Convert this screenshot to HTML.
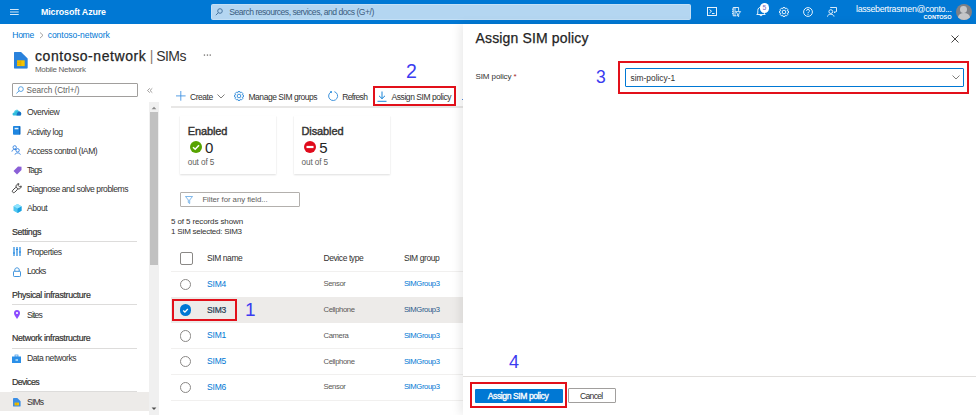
<!DOCTYPE html>
<html><head><meta charset="utf-8">
<style>
*{box-sizing:border-box;margin:0;padding:0}
html,body{width:976px;height:415px;overflow:hidden;background:#fff;font-family:"Liberation Sans",sans-serif;color:#323130}
.a{position:absolute;white-space:nowrap;line-height:1}
svg{position:absolute;overflow:visible}
#hdr{position:absolute;left:0;top:0;width:976px;height:24px;background:#0078d4}
.nav{font-size:8.6px;color:#323130;letter-spacing:-0.45px}
.sec{font-size:8.8px;color:#323130;letter-spacing:-0.35px;-webkit-text-stroke:0.2px #323130}
.dv{position:absolute;height:1px;background:#e1dfdd}
.lnk{color:#0078d4}
.red{position:absolute;border:2px solid #e2101a}
.sb{-webkit-text-stroke:0.28px currentColor}
.num{position:absolute;font-size:19.5px;color:#3b3bf0;line-height:1}
</style></head><body>
<div id="hdr"></div>
<!-- hamburger -->
<svg style="left:0;top:0" width="30" height="24"><path d="M10 9.5 H18.7 M10 12 H18.7 M10 14.5 H18.7" stroke="#d4e7f8" stroke-width="1.05"/></svg>
<div class="a" style="left:41px;top:7.7px;font-size:8.9px;font-weight:700;color:#fff;letter-spacing:-0.12px">Microsoft Azure</div>
<!-- global search -->
<div style="position:absolute;left:211px;top:4px;width:480px;height:15.6px;background:#b4d6f1;border:1px solid #c4e0f6;border-radius:1.5px"></div>
<svg style="left:215px;top:8px" width="8" height="8" viewBox="0 0 8 8"><circle cx="5" cy="3" r="2.3" fill="none" stroke="#3d6c99" stroke-width="0.9"/><line x1="3.3" y1="4.7" x2="0.8" y2="7.2" stroke="#3d6c99" stroke-width="0.9"/></svg>
<div class="a" style="left:229.3px;top:7.8px;font-size:8.6px;letter-spacing:-0.5px;color:#3a5c7e">Search resources, services, and docs (G+/)</div>
<!-- header icons -->
<svg style="left:707px;top:7px" width="10" height="9"><rect x="0.5" y="0.5" width="9" height="8" fill="none" stroke="#fff" stroke-width="0.9"/><path d="M2.5 2.5 L4.5 4.2 L2.5 6" fill="none" stroke="#fff" stroke-width="0.9"/><line x1="5" y1="6.5" x2="7.5" y2="6.5" stroke="#fff" stroke-width="0.9"/></svg>
<svg style="left:731px;top:7px" width="10" height="10" viewBox="0 0 10 10"><path d="M5.5 8.8 H2.2 V0.5 H7.6 V3.8" fill="none" stroke="#fff" stroke-width="0.85"/><path d="M1 2.2 H2.2 M1 4.4 H2.2 M1 6.6 H2.2 M4 0.5 V8.8" stroke="#fff" stroke-width="0.8"/><path d="M4.6 4.6 H9.6 L7.7 7 V9.6 L6.6 9 V7 Z" fill="#0078d4" stroke="#fff" stroke-width="0.8" stroke-linejoin="round"/></svg>
<svg style="left:756px;top:6px" width="10" height="10"><path d="M0.8 8.5 L1.8 7.2 V4.5 C1.8 2.3 3.3 1.2 5 1.2 C6.7 1.2 8.2 2.3 8.2 4.5 V7.2 L9.2 8.5 Z" fill="none" stroke="#fff" stroke-width="0.9" stroke-linejoin="round"/><path d="M3.8 9.6 H6.2" stroke="#fff" stroke-width="0.9"/></svg>
<div style="position:absolute;left:759.5px;top:3.2px;width:9.6px;height:9.6px;border-radius:50%;background:#fff"></div>
<div class="a" style="left:762.4px;top:4.6px;font-size:6.8px;color:#7a6ac0">5</div>
<svg style="left:779px;top:6.8px" width="10" height="10" viewBox="0 0 10 10"><path d="M4.1 0.5 H5.9 L6.3 1.8 L7.6 1.2 L8.8 2.4 L8.2 3.7 L9.5 4.1 V5.9 L8.2 6.3 L8.8 7.6 L7.6 8.8 L6.3 8.2 L5.9 9.5 H4.1 L3.7 8.2 L2.4 8.8 L1.2 7.6 L1.8 6.3 L0.5 5.9 V4.1 L1.8 3.7 L1.2 2.4 L2.4 1.2 L3.7 1.8 Z" fill="none" stroke="#fff" stroke-width="0.9" stroke-linejoin="round"/><circle cx="5" cy="5" r="1.8" fill="none" stroke="#fff" stroke-width="0.9"/></svg>
<svg style="left:803px;top:7px" width="10" height="10" viewBox="0 0 10 10"><circle cx="5" cy="5" r="4.4" fill="none" stroke="#fff" stroke-width="0.9"/><path d="M3.5 3.8 C3.5 2 6.5 2 6.5 3.8 C6.5 5 5 5 5 6.3" fill="none" stroke="#fff" stroke-width="0.9"/><circle cx="5" cy="7.6" r="0.5" fill="#fff"/></svg>
<svg style="left:827px;top:7px" width="10" height="10" viewBox="0 0 10 10"><path d="M3.2 0.5 H9.5 V4.5 L7.2 5.5" fill="none" stroke="#fff" stroke-width="0.85"/><circle cx="7.5" cy="5.1" r="0.6" fill="#fff"/><circle cx="3.8" cy="4.6" r="1.9" fill="none" stroke="#fff" stroke-width="0.85"/><path d="M0.5 9.6 C0.5 6.5 7 6.5 7 9.6" fill="none" stroke="#fff" stroke-width="0.85"/></svg>
<div class="a" style="left:856px;top:4.6px;font-size:8.8px;color:#fff;letter-spacing:-0.3px">lassebertrasmen@conto...</div>
<div class="a" style="left:923.5px;top:15px;font-size:5.6px;font-weight:700;color:#fff">CONTOSO</div>
<div style="position:absolute;left:955.8px;top:3.7px;width:16.3px;height:16.3px;border-radius:50%;background:#7d8086;overflow:hidden">
 <div style="position:absolute;left:4.7px;top:2.6px;width:6.8px;height:6.8px;border-radius:50%;background:#c5c6c8"></div>
 <div style="position:absolute;left:1.8px;top:9.4px;width:12.7px;height:9px;border-radius:50% 50% 0 0;background:#c5c6c8"></div>
</div>

<!-- breadcrumb -->
<div class="a lnk" style="left:12.3px;top:31px;font-size:8.6px;letter-spacing:-0.35px">Home</div>
<svg style="left:39px;top:32px" width="5" height="7"><path d="M1 0.5 L4 3.3 L1 6.1" fill="none" stroke="#8a8886" stroke-width="0.8"/></svg>
<div class="a lnk" style="left:47.7px;top:31px;font-size:8.6px;letter-spacing:-0.07px">contoso-network</div>

<!-- resource icon -->
<svg style="left:13.5px;top:51.5px" width="14" height="17" viewBox="0 0 14 17"><path d="M0 0.6 Q0 0 0.6 0 H7 L13.6 6.4 V15.8 Q13.6 16.4 13 16.4 H0.6 Q0 16.4 0 15.8 Z" fill="#3a8ee6"/><path d="M0 0.6 Q0 0 0.6 0 H7 L13.6 6.4 V15.8 Q13.6 16.4 13 16.4 H0.6 Q0 16.4 0 15.8 Z" fill="#0f6cc9" opacity="0.35" transform="translate(0,0)"/><rect x="3" y="8.3" width="7.7" height="5.8" fill="#f7c400"/><path d="M3 10.2 H6.5 M3 12.2 H6.5 M6.8 8.3 V14.1" stroke="#d49e00" stroke-width="0.7"/></svg>
<div class="a" style="left:35px;top:49.4px;font-size:14px;color:#242424;letter-spacing:0.58px;-webkit-text-stroke:0.25px #242424">contoso-network<span style="-webkit-text-stroke:0;letter-spacing:-0.55px;color:#323130"> <span style="color:#8a7a70;font-weight:400">|</span> SIMs</span></div>
<svg style="left:203px;top:54px" width="9" height="3"><rect x="0.8" y="0.3" width="1.3" height="1.6" fill="#8a8886"/><rect x="3.8" y="0.3" width="1.3" height="1.6" fill="#8a8886"/><rect x="6.6" y="0.3" width="1.3" height="1.6" fill="#8a8886"/></svg>
<div class="a" style="left:35px;top:65.8px;font-size:8px;letter-spacing:-0.32px;color:#605e5c">Mobile Network</div>

<!-- sidebar search -->
<div style="position:absolute;left:12.3px;top:83.3px;width:125.5px;height:14.2px;border:1px solid #a19f9d;border-radius:1px"></div>
<svg style="left:15.5px;top:86.3px" width="8" height="8" viewBox="0 0 8 8"><circle cx="4.9" cy="3.1" r="2.4" fill="none" stroke="#2b88d8" stroke-width="0.75"/><line x1="3.2" y1="4.8" x2="0.4" y2="7.4" stroke="#2b88d8" stroke-width="0.8"/></svg>
<div class="a" style="left:26.6px;top:87.1px;font-size:8.2px;color:#605e5c;letter-spacing:-0.05px">Search (Ctrl+/)</div>
<svg style="left:146.5px;top:88px" width="6" height="5" viewBox="0 0 6 5"><path d="M2.8 0.3 L0.5 2.5 L2.8 4.7 M5.3 0.3 L3 2.5 L5.3 4.7" fill="none" stroke="#8a8886" stroke-width="0.8"/></svg>

<!-- sidebar scrollbar -->
<div style="position:absolute;left:149px;top:102px;width:9.8px;height:313px;background:#f0f0f0"></div>
<div style="position:absolute;left:149.8px;top:111.7px;width:8.1px;height:153.3px;background:#c1c1c1"></div>
<svg style="left:151.2px;top:106.2px" width="6" height="4"><path d="M0.6 3.2 L3 0.8 L5.4 3.2 Z" fill="#8a8a8a"/></svg>
<svg style="left:151.2px;top:407.3px" width="6" height="4"><path d="M0.6 0.6 L3 3 L5.4 0.6 Z" fill="#505050"/></svg>

<!-- sidebar selected -->
<div style="position:absolute;left:0;top:392.2px;width:148.8px;height:18.4px;background:#edebe9"></div>

<!-- sidebar items -->
<div class="a nav" style="left:27px;top:108.0px">Overview</div>
<div class="a nav" style="left:27px;top:128px">Activity log</div>
<div class="a nav" style="left:27px;top:146.5px">Access control (IAM)</div>
<div class="a nav" style="left:27px;top:166px;letter-spacing:-0.95px">Tags</div>
<div class="a nav" style="left:27px;top:185.1px;letter-spacing:-0.45px">Diagnose and solve problems</div>
<div class="a nav" style="left:27px;top:203.7px">About</div>
<div class="a sec" style="left:12px;top:227.6px">Settings</div>
<div class="dv" style="left:12px;top:241px;width:125px;background:#dddcdb"></div>
<div class="a nav" style="left:27px;top:248.1px">Properties</div>
<div class="a nav" style="left:27px;top:266.9px;letter-spacing:-0.8px">Locks</div>
<div class="a sec" style="left:12px;top:290.5px">Physical infrastructure</div>
<div class="dv" style="left:12px;top:304px;width:125px;background:#dddcdb"></div>
<div class="a nav" style="left:27px;top:310.6px;letter-spacing:-0.85px">Sites</div>
<div class="a sec" style="left:12px;top:334.1px">Network infrastructure</div>
<div class="dv" style="left:12px;top:347.6px;width:125px;background:#dddcdb"></div>
<div class="a nav" style="left:27px;top:354.2px">Data networks</div>
<div class="a sec" style="left:12px;top:377.8px;letter-spacing:-0.62px">Devices</div>
<div class="dv" style="left:12px;top:391.4px;width:125px;background:#dddcdb"></div>
<div class="a nav" style="left:27px;top:398.0px;letter-spacing:-0.85px">SIMs</div>

<!-- sidebar icons -->
<svg style="left:11.8px;top:108.6px" width="10" height="7" viewBox="0 0 10 7"><path d="M2 6.6 C0.2 6.6 0 3.6 2 3.4 C2.3 0.6 6 -0.2 7 2.4 C9.6 2.4 10 6.6 7.8 6.6 Z" fill="#32bedd"/><path d="M4.5 6.6 C4.5 3.8 6.5 2.2 7.4 2.5 C9.6 2.6 10 6.6 7.8 6.6 Z" fill="#1a6fc4"/><path d="M2.2 3.6 C2.8 1.6 4.5 1 5.6 1.3" fill="none" stroke="#9cebff" stroke-width="0.6"/></svg>
<svg style="left:13.1px;top:126.3px" width="8" height="9" viewBox="0 0 8 9"><rect x="0" y="0" width="7.3" height="8.7" rx="0.8" fill="#1f86e0"/><rect x="6.3" y="0.4" width="1" height="8" fill="#0f5fb0"/><rect x="1.6" y="1.8" width="3.8" height="1.5" fill="#fff" opacity="0.9"/></svg>
<svg style="left:11px;top:144.8px" width="10" height="10" viewBox="0 0 10 10"><g fill="none" stroke="#2f7fe0" stroke-width="0.9"><circle cx="3.7" cy="2.4" r="1.7"/><path d="M0.9 6.6 C0.9 4.6 3.5 4 5.2 4.6"/><circle cx="6.6" cy="5.3" r="1.7"/><path d="M4 9.6 C4 7.4 9.3 7.4 9.3 9.6"/></g></svg>
<svg style="left:12.5px;top:165.5px" width="9" height="9" viewBox="0 0 9 9"><path d="M0.5 5 L5 0.5 L8.5 0.8 L8.5 4 L4 8.5 Z" fill="#8a5fd6"/></svg>
<svg style="left:11px;top:183px" width="11" height="11" viewBox="0 0 11 11"><g transform="rotate(45 5.5 5.5)" fill="none" stroke="#323130" stroke-width="0.85"><rect x="4.1" y="4.6" width="2.8" height="6.2" rx="1.4"/><path d="M4.1 4.8 C2.6 4 2.6 0.6 4 0.4 L4.6 2.2 H6.4 L7 0.4 C8.4 0.6 8.4 4 6.9 4.8"/></g></svg>
<svg style="left:12.5px;top:203.5px" width="9" height="9" viewBox="0 0 9 9"><path d="M4.5 0 L8.5 2.2 L8.5 6.8 L4.5 9 L0.5 6.8 L0.5 2.2 Z" fill="#50c7f0"/><path d="M4.5 4.4 L8.5 2.2 L8.5 6.8 L4.5 9 Z" fill="#1ba1e2"/><path d="M0.5 2.2 L4.5 0 L8.5 2.2 L4.5 4.4 Z" fill="#8fe3ff"/></svg>
<svg style="left:12.5px;top:247px" width="8" height="9" viewBox="0 0 8 9"><path d="M1 0 V9 M4 0 V9 M7 0 V9" stroke="#1f86e0" stroke-width="1.2"/><path d="M0 6 H2 M3 2.5 H5 M6 5 H8" stroke="#1f86e0" stroke-width="1.2"/></svg>
<svg style="left:13px;top:266.5px" width="8" height="10" viewBox="0 0 8 10"><rect x="0.5" y="4.3" width="7" height="5.2" rx="0.8" fill="none" stroke="#2b88d8" stroke-width="0.9"/><path d="M1.8 4.3 V2.8 C1.8 0.2 6.2 0.2 6.2 2.8 V4.3" fill="none" stroke="#2b88d8" stroke-width="0.9"/></svg>
<svg style="left:14px;top:310px" width="6" height="9" viewBox="0 0 6 9"><path d="M3 9 C1 6 0 4.5 0 3 C0 1.2 1.3 0 3 0 C4.7 0 6 1.2 6 3 C6 4.5 5 6 3 9 Z" fill="#8c4bff"/><circle cx="3" cy="3" r="1.1" fill="#fff"/></svg>
<svg style="left:12px;top:354.5px" width="9" height="8" viewBox="0 0 9 8"><rect x="0" y="1.5" width="9" height="6.5" fill="#2b8fe8"/><rect x="3" y="0" width="3" height="2" fill="none" stroke="#2b8fe8" stroke-width="0.7"/><rect x="3.5" y="4" width="2.5" height="2" fill="#9ad0f5"/></svg>
<svg style="left:12.9px;top:397.9px" width="8" height="9" viewBox="0 0 8 9"><path d="M0 0.4 Q0 0 0.4 0 H4.3 L7.6 3.2 V8.1 Q7.6 8.5 7.2 8.5 H0.4 Q0 8.5 0 8.1 Z" fill="#3a8ee6"/><rect x="1.6" y="4.6" width="4.4" height="2.8" fill="#f7c400"/><path d="M3.8 4.6 V7.4 M1.6 6 H3.8" stroke="#c89a00" stroke-width="0.5"/></svg>

<!-- toolbar -->
<svg style="left:175.8px;top:91px" width="10" height="10"><path d="M4.8 0 V9.7 M0 4.9 H9.6" stroke="#3a8ee0" stroke-width="0.85"/></svg>
<div class="a" style="left:190px;top:92.7px;font-size:8.5px;letter-spacing:-0.45px">Create</div>
<svg style="left:216.8px;top:93.5px" width="8" height="5"><path d="M0.5 0.5 L4 4 L7.5 0.5" fill="none" stroke="#605e5c" stroke-width="0.8"/></svg>
<svg style="left:234px;top:90.8px" width="10" height="10" viewBox="0 0 10 10"><path d="M4.1 0.5 H5.9 L6.3 1.8 L7.6 1.2 L8.8 2.4 L8.2 3.7 L9.5 4.1 V5.9 L8.2 6.3 L8.8 7.6 L7.6 8.8 L6.3 8.2 L5.9 9.5 H4.1 L3.7 8.2 L2.4 8.8 L1.2 7.6 L1.8 6.3 L0.5 5.9 V4.1 L1.8 3.7 L1.2 2.4 L2.4 1.2 L3.7 1.8 Z" fill="none" stroke="#2b88d8" stroke-width="0.9" stroke-linejoin="round"/><circle cx="5" cy="5" r="1.8" fill="none" stroke="#2b88d8" stroke-width="0.9"/></svg>
<div class="a" style="left:248.5px;top:92.7px;font-size:8.5px;letter-spacing:-0.47px">Manage SIM groups</div>
<svg style="left:327.8px;top:90.8px" width="10" height="10" viewBox="0 0 10 10"><path d="M3.3 0.9 A4.5 4.5 0 1 0 6.4 0.7" fill="none" stroke="#2b88d8" stroke-width="0.9"/><path d="M1.8 0.3 L3.8 0.3 L3.8 2.3 Z" fill="#0078d4"/></svg>
<div class="a" style="left:342.3px;top:92.7px;font-size:8.5px;letter-spacing:-0.7px">Refresh</div>
<svg style="left:377px;top:90.5px" width="10" height="11" viewBox="0 0 10 11"><path d="M5 0.5 V7.5 M2 4.8 L5 7.7 L8 4.8" fill="none" stroke="#0078d4" stroke-width="0.9"/><path d="M0.5 10.3 H9.5" stroke="#0078d4" stroke-width="0.9"/></svg>
<div class="a" style="left:391.6px;top:92.7px;font-size:8.5px;letter-spacing:-0.45px">Assign SIM policy</div>
<div class="dv" style="left:171px;top:106px;width:292px;height:1.8px;background:#e8e7e6"></div>
<div class="red" style="left:372.6px;top:85.8px;width:83.4px;height:20.2px"></div>
<div class="num" style="left:406px;top:62px">2</div>

<!-- cards -->
<div style="position:absolute;left:180px;top:115.8px;width:96px;height:58.3px;background:#fff;box-shadow:0 0.6px 1.8px rgba(0,0,0,0.13),0 0.3px 0.9px rgba(0,0,0,0.11)"></div>
<div style="position:absolute;left:293.7px;top:115.8px;width:96.7px;height:58.3px;background:#fff;box-shadow:0 0.6px 1.8px rgba(0,0,0,0.13),0 0.3px 0.9px rgba(0,0,0,0.11)"></div>
<div class="a" style="left:187.7px;top:126px;font-size:11px;color:#323130;letter-spacing:-0.1px;-webkit-text-stroke:0.4px #323130">Enabled</div>
<div class="a" style="left:301.5px;top:126px;font-size:11px;color:#323130;letter-spacing:-0.1px;-webkit-text-stroke:0.4px #323130">Disabled</div>
<svg style="left:190px;top:141.4px" width="12" height="12" viewBox="0 0 12 12"><circle cx="6" cy="6" r="6" fill="#57a300"/><path d="M3 6.2 L5.2 8.3 L9 4.2" fill="none" stroke="#fff" stroke-width="1.5"/></svg>
<svg style="left:304px;top:141.4px" width="12" height="12" viewBox="0 0 12 12"><circle cx="6" cy="6" r="6" fill="#e00b1c"/><rect x="2.5" y="4.9" width="7" height="2.2" fill="#fff"/></svg>
<div class="a" style="left:205px;top:140px;font-size:15px;color:#242424">0</div>
<div class="a" style="left:319.3px;top:140px;font-size:15px;color:#242424">5</div>
<div class="a" style="left:187.7px;top:159px;font-size:8.2px;color:#605e5c;letter-spacing:-0.1px">out of 5</div>
<div class="a" style="left:301.5px;top:159px;font-size:8.2px;color:#605e5c;letter-spacing:-0.1px">out of 5</div>

<!-- filter -->
<div style="position:absolute;left:180.2px;top:192px;width:119.4px;height:14.6px;border:1px solid #b3b0ad;border-radius:1px"></div>
<svg style="left:185px;top:195.5px" width="8" height="8" viewBox="0 0 8 8"><path d="M0.5 0.5 H7.5 L4.7 4 V7.5 L3.3 6.5 V4 Z" fill="none" stroke="#4a9ae0" stroke-width="0.7" stroke-linejoin="round"/></svg>
<div class="a" style="left:202.4px;top:195.8px;font-size:7.8px;color:#605e5c;letter-spacing:-0.05px">Filter for any field...</div>
<div class="a" style="left:171.1px;top:217.8px;font-size:8px;color:#323130;letter-spacing:-0.12px">5 of 5 records shown</div>
<div class="a" style="left:171.1px;top:228px;font-size:8px;color:#323130;letter-spacing:-0.27px">1 SIM selected: SIM3</div>

<!-- table -->
<div style="position:absolute;left:171px;top:297.2px;width:292px;height:25.6px;background:#edebe9"></div>
<div class="dv" style="left:171px;top:271px;width:292px;background:#f1f0ef"></div>
<div class="dv" style="left:171px;top:348px;width:292px;background:#f1f0ef"></div>
<div class="dv" style="left:171px;top:373.8px;width:292px;background:#f1f0ef"></div>
<div class="dv" style="left:171px;top:399.8px;width:292px;background:#f1f0ef"></div>
<div style="position:absolute;left:179.7px;top:252.3px;width:13px;height:12.7px;border:1px solid #8a8886;border-radius:2px"></div>
<div class="a" style="left:207px;top:253.8px;font-size:8.5px;color:#323130;letter-spacing:-0.42px">SIM name</div>
<div class="a" style="left:323.5px;top:253.8px;font-size:8.5px;color:#323130;letter-spacing:-0.42px">Device type</div>
<div class="a" style="left:403.9px;top:253.8px;font-size:8.5px;color:#323130;letter-spacing:-0.42px">SIM group</div>
<!-- rows -->
<div style="position:absolute;left:179.8px;top:278.5px;width:11.2px;height:11.2px;border:1px solid #8a8886;border-radius:50%"></div>
<div style="position:absolute;left:179.8px;top:304.4px;width:11.2px;height:11.2px;border-radius:50%;background:#0078d4"></div>
<svg style="left:182px;top:306.5px" width="7" height="7"><path d="M1.2 3.5 L2.9 5.1 L5.8 2" fill="none" stroke="#fff" stroke-width="1.35"/></svg>
<div style="position:absolute;left:179.8px;top:330.4px;width:11.2px;height:11.2px;border:1px solid #8a8886;border-radius:50%"></div>
<div style="position:absolute;left:179.8px;top:355.9px;width:11.2px;height:11.2px;border:1px solid #8a8886;border-radius:50%"></div>
<div style="position:absolute;left:179.8px;top:381.6px;width:11.2px;height:11.2px;border:1px solid #8a8886;border-radius:50%"></div>

<div class="a lnk" style="left:207px;top:279.6px;font-size:8.5px;letter-spacing:-0.2px">SIM4</div>
<div class="a" style="left:207px;top:306.2px;font-size:8.5px;letter-spacing:-0.2px;color:#243a52;-webkit-text-stroke:0.2px #243a52">SIM3</div>
<div class="a lnk" style="left:207px;top:331.4px;font-size:8.5px;letter-spacing:-0.2px">SIM1</div>
<div class="a lnk" style="left:207px;top:357.0px;font-size:8.5px;letter-spacing:-0.2px">SIM5</div>
<div class="a lnk" style="left:207px;top:382.6px;font-size:8.5px;letter-spacing:-0.2px">SIM6</div>

<div class="a" style="left:323.5px;top:280.1px;font-size:7.7px;letter-spacing:-0.4px;color:#5a5856">Sensor</div>
<div class="a" style="left:323.5px;top:305.9px;font-size:7.7px;letter-spacing:-0.4px;color:#5a5856">Cellphone</div>
<div class="a" style="left:323.5px;top:331.8px;font-size:7.7px;letter-spacing:-0.4px;color:#5a5856">Camera</div>
<div class="a" style="left:323.5px;top:357.5px;font-size:7.7px;letter-spacing:-0.4px;color:#5a5856">Cellphone</div>
<div class="a" style="left:323.5px;top:383.2px;font-size:7.7px;letter-spacing:-0.4px;color:#5a5856">Sensor</div>

<div class="a lnk" style="left:403.9px;top:280.1px;font-size:7.7px;letter-spacing:-0.4px">SIMGroup3</div>
<div class="a" style="left:403.9px;top:305.9px;font-size:7.7px;letter-spacing:-0.4px;color:#2b5a8a">SIMGroup3</div>
<div class="a lnk" style="left:403.9px;top:331.8px;font-size:7.7px;letter-spacing:-0.4px">SIMGroup3</div>
<div class="a lnk" style="left:403.9px;top:357.5px;font-size:7.7px;letter-spacing:-0.4px">SIMGroup3</div>
<div class="a lnk" style="left:403.9px;top:383.2px;font-size:7.7px;letter-spacing:-0.4px">SIMGroup3</div>

<div class="red" style="left:171.8px;top:298.8px;width:65px;height:22.7px"></div>
<div class="num" style="left:245px;top:300.3px;font-size:19px">1</div>

<!-- right panel -->
<div style="position:absolute;left:462.5px;top:24px;width:514px;height:391px;background:#fff;box-shadow:-3px 0 9px rgba(0,0,0,0.085)"></div>
<div style="position:absolute;left:461.8px;top:98.8px;width:1.4px;height:1.6px;background:#4a7fd0"></div>
<div class="a" style="left:475.5px;top:31px;font-size:14px;color:#242424;letter-spacing:0.15px;-webkit-text-stroke:0.25px #242424">Assign SIM policy</div>
<svg style="left:950.5px;top:34.8px" width="8" height="8"><path d="M0.5 0.5 L7.5 7.5 M7.5 0.5 L0.5 7.5" stroke="#323130" stroke-width="0.9"/></svg>
<div class="a" style="left:475.5px;top:73.4px;font-size:8px;letter-spacing:-0.1px;color:#323130">SIM policy <span style="color:#a4262c">*</span></div>
<div class="num" style="left:596px;top:68.5px;font-size:17.5px">3</div>
<div class="red" style="left:618.2px;top:60.6px;width:350.5px;height:33.4px"></div>
<div style="position:absolute;left:625px;top:68.4px;width:338.7px;height:18.9px;border:1.5px solid #0078d4;border-radius:1px"></div>
<div class="a" style="left:630.5px;top:74px;font-size:8.4px;color:#323130;letter-spacing:0px">sim-policy-1</div>
<svg style="left:951.8px;top:75.3px" width="8" height="5"><path d="M0.5 0.5 L4 4 L7.5 0.5" fill="none" stroke="#605e5c" stroke-width="0.8"/></svg>

<div class="num" style="left:509px;top:353px;font-size:18px">4</div>
<div class="dv" style="left:463px;top:376px;width:513px;background:#e1dfdd"></div>
<div class="red" style="left:469.8px;top:382.4px;width:96.8px;height:25.7px"></div>
<div style="position:absolute;left:474.9px;top:388.7px;width:88px;height:14px;background:#0078d4;border-radius:1px"></div>
<div class="a" style="left:487.8px;top:391.8px;font-size:8.6px;color:#fff;letter-spacing:-0.43px;-webkit-text-stroke:0.32px #fff">Assign SIM policy</div>
<div style="position:absolute;left:567.9px;top:388.3px;width:47.9px;height:14.4px;border:1px solid #a19f9d;border-radius:1px"></div>
<div class="a" style="left:580px;top:391.8px;font-size:8.6px;letter-spacing:-0.7px;color:#323130">Cancel</div>
</body></html>
